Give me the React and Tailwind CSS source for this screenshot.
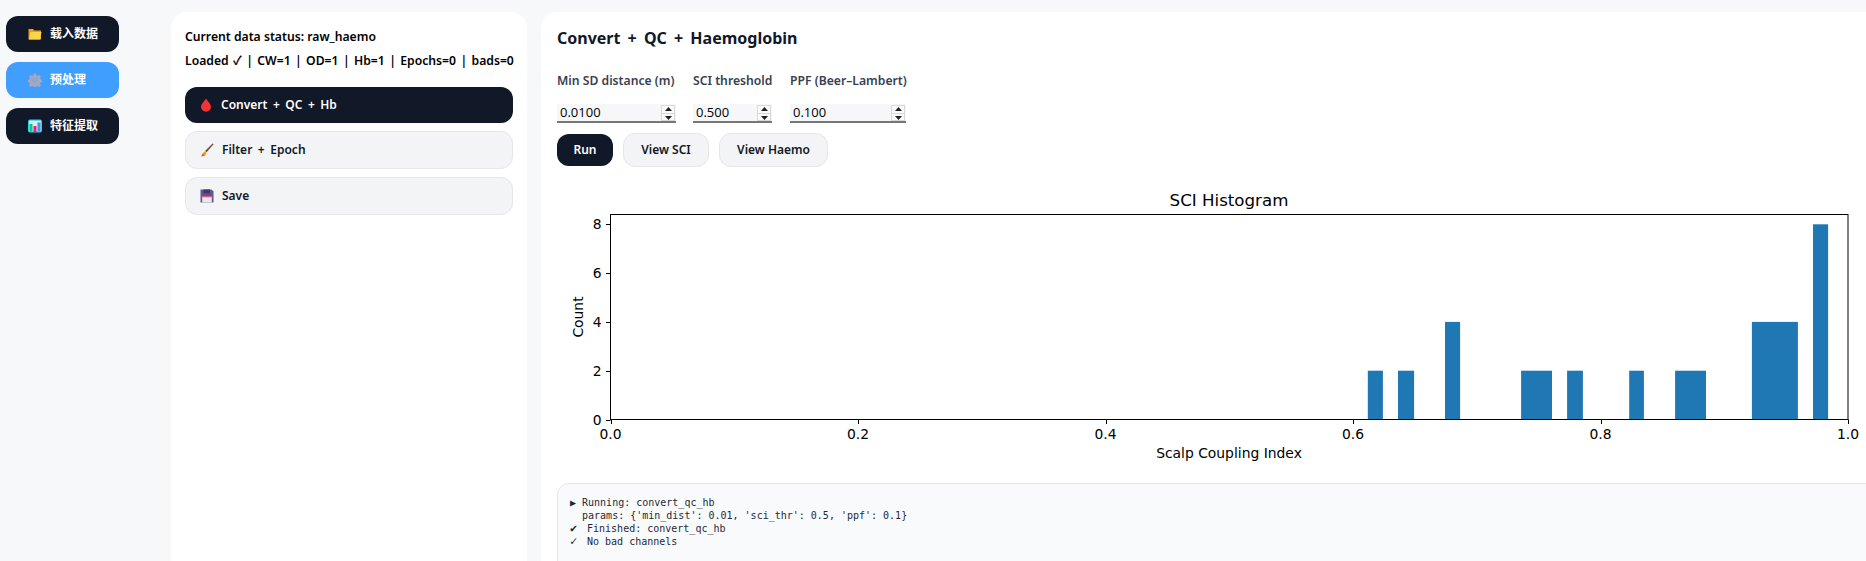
import React from "react";

const FONT = "font-['Noto_Sans','Noto_Sans_CJK_SC',sans-serif]";

const FolderIcon = () => (
    <svg width="14" height="14" viewBox="0 0 14 14" className="shrink-0">
        <path d="M0.5 2h4.5l1.2 1.5h6.8v9h-12.5z" fill="#f59e0b" />
        <path d="M2.5 5h11l-1.5 7.5h-11z" fill="#fcd34d" />
    </svg>
);

const GearIcon = () => (
    <svg width="14" height="14" viewBox="0 0 14 14" className="shrink-0">
        <path
            d="M5.8 0.6h2.4l.3 1.8 1.3.6 1.5-1 1.7 1.7-1 1.5.6 1.3 1.8.3v2.4l-1.8.3-.6 1.3 1 1.5-1.7 1.7-1.5-1-1.3.6-.3 1.8h-2.4l-.3-1.8-1.3-.6-1.5 1-1.7-1.7 1-1.5-.6-1.3-1.8-.3v-2.4l1.8-.3.6-1.3-1-1.5 1.7-1.7 1.5 1 1.3-.6z"
            fill="#a5a8bd"
        />
        <circle cx="7" cy="7" r="2.6" fill="#7fa6dc" />
        <circle cx="7" cy="7" r="1.2" fill="#a5a8bd" />
    </svg>
);

const ChartIcon = () => (
    <svg width="14" height="14" viewBox="0 0 14 14" className="shrink-0">
        <rect x="0" y="0.5" width="14" height="13" rx="2" fill="#22d3ee" />
        <rect x="1.2" y="1.7" width="11.6" height="10.6" fill="#e5e7eb" />
        <rect x="1.5" y="5" width="3" height="7.5" fill="#10c77f" />
        <rect x="5.5" y="7" width="3" height="6" fill="#ec1c8c" />
        <rect x="9.5" y="3.5" width="3" height="9" fill="#2f9fd8" />
    </svg>
);

const DropIcon = () => (
    <svg width="12" height="14" viewBox="0 0 12 14" className="shrink-0">
        <path d="M6 0.5c1 2.2 5 5.2 5 8.3a5 5 0 0 1-10 0c0-3.1 4-6.1 5-8.3z" fill="#f43232" />
    </svg>
);

const BrushIcon = () => (
    <svg width="14" height="14" viewBox="0 0 14 14" className="shrink-0">
        <path d="M12.6 0.6l1 .7-7 8-1.6-1.2z" fill="#7c4a32" />
        <path d="M4.6 8.4l2 1.5c-.5 2-2 3.3-5.6 3.4 1.4-1 1.6-3.8 3.6-4.9z" fill="#f59e0b" />
        <path d="M1 13.3c1-.7 1.4-1.6 1.8-2.6l1.8 1.5c-.9.7-2 1-3.6 1.1z" fill="#ef4444" />
    </svg>
);

const SaveIcon = () => (
    <svg width="14" height="14" viewBox="0 0 14 14" className="shrink-0">
        <path d="M0.5 0.5h11l2 2v11h-13z" fill="#5f5791" />
        <rect x="3.5" y="0.5" width="6.5" height="4" fill="#3f3a6b" />
        <rect x="2.2" y="7" width="9.6" height="6.5" fill="#e8e6ef" />
        <rect x="2.2" y="7" width="9.6" height="1.2" fill="#e0566a" />
    </svg>
);

const navItems = [
    { label: "载入数据", icon: <FolderIcon />, active: false },
    { label: "预处理", icon: <GearIcon />, active: true },
    { label: "特征提取", icon: <ChartIcon />, active: false },
];

const stepItems = [
    { label: "Convert + QC + Hb", icon: <DropIcon />, active: true },
    { label: "Filter + Epoch", icon: <BrushIcon />, active: false },
    { label: "Save", icon: <SaveIcon />, active: false },
];

const params = [
    { label: "Min SD distance (m)", value: "0.0100", step: "0.0001", width: "w-[119px]", col: "w-[136px]" },
    { label: "SCI threshold", value: "0.500", step: "0.01", width: "w-[79px]", col: "w-[97px]" },
    { label: "PPF (Beer–Lambert)", value: "0.100", step: "0.01", width: "w-[116px]", col: "w-[130px]" },
];

// left / right edge in svg coordinates, height in counts
const bars = [
    [810.8, 825.9, 2],
    [841, 857.1, 2],
    [888, 903.1, 4],
    [964.1, 995, 2],
    [1010.1, 1025.9, 2],
    [1072.2, 1086.9, 2],
    [1118.1, 1149, 2],
    [1194.9, 1240.9, 4],
    [1256, 1271.1, 8],
];

const AX = { left: 53.5, right: 1291, top: 34.5, bottom: 239.5 };
const yPos = (c) => AX.bottom - c * 24.4;
const xPos = (v) => AX.left + v * (AX.right - AX.left);

const Histogram = () => (
    <svg width="1309" height="300" viewBox="0 0 1309 300" className="block shrink-0" fontFamily="'DejaVu Sans', sans-serif" fill="#000">
        <rect width="1309" height="300" fill="#fff" />
        {bars.map(([a, b, c]) => (
            <rect key={a} x={a} y={yPos(c)} width={b - a} height={c * 24.4} fill="#1f77b4" />
        ))}
        <rect x={AX.left} y={AX.top} width={AX.right - AX.left} height={AX.bottom - AX.top} fill="none" stroke="#000" strokeWidth="1" />
        {[0, 2, 4, 6, 8].map((c) => (
            <g key={c}>
                <line x1={AX.left - 4.5} x2={AX.left} y1={Math.round(yPos(c)) + 0.5} y2={Math.round(yPos(c)) + 0.5} stroke="#000" />
                <text x={AX.left - 9} y={yPos(c) + 5} textAnchor="end" fontSize="13.89">{c}</text>
            </g>
        ))}
        {[0, 0.2, 0.4, 0.6, 0.8, 1].map((v) => (
            <g key={v}>
                <line x1={Math.round(xPos(v)) + 0.5} x2={Math.round(xPos(v)) + 0.5} y1={AX.bottom} y2={AX.bottom + 4.5} stroke="#000" />
                <text x={xPos(v)} y="259" textAnchor="middle" fontSize="13.89">{v.toFixed(1)}</text>
            </g>
        ))}
        <text x="672" y="26" textAnchor="middle" fontSize="16.67">SCI Histogram</text>
        <text x="672" y="278" textAnchor="middle" fontSize="13.89">Scalp Coupling Index</text>
        <text transform="translate(26 137) rotate(-90)" textAnchor="middle" fontSize="13.89">Count</text>
    </svg>
);

const Spinner = () => (
    <span className="pointer-events-none absolute right-[1px] top-[1px] flex h-[16px] w-[14px] flex-col items-center justify-center gap-[2px] border border-[#d8d8d8] bg-[#fbfbfb]">
        <svg width="7" height="4" viewBox="0 0 7 4"><path d="M3.5 0L7 4H0z" fill="#222" /></svg>
        <span className="h-px w-full bg-[#d8d8d8]" />
        <svg width="7" height="4" viewBox="0 0 7 4"><path d="M0 0h7L3.5 4z" fill="#222" /></svg>
    </span>
);

const App = () => {
    return (
        <div className={`${FONT} flex h-screen w-full overflow-hidden bg-[#f7f8fa] text-[#111827]`}>
            <div className="flex w-[119px] shrink-0 flex-col gap-[10px] pl-[6px] pt-4">
                {navItems.map((item) => (
                    <button
                        key={item.label}
                        className={`flex h-9 w-[113px] items-center gap-2 rounded-xl pl-[22px] text-xs font-semibold text-white ${
                            item.active ? "bg-[#409eff]" : "bg-[#111827]"
                        }`}
                    >
                        {item.icon}
                        <span>{item.label}</span>
                    </button>
                ))}
            </div>

            <div className="ml-[52px] mt-3 w-[356px] shrink-0 rounded-t-2xl bg-white pl-[14px] pt-[15px]">
                <p className="text-[12.2px] font-semibold leading-[20px] text-black">Current data status: raw_haemo</p>
                <p className="mt-1 whitespace-nowrap text-[12.2px] font-semibold leading-[20px] text-black [word-spacing:1.2px]">
                    Loaded ✓ | CW=1 | OD=1 | Hb=1 | Epochs=0 | bads=0
                </p>
                <div className="mt-4 flex flex-col gap-2">
                    {stepItems.map((item) => (
                        <button
                            key={item.label}
                            className={`flex w-[328px] items-center rounded-xl text-xs font-semibold [word-spacing:2.4px] ${
                                item.active
                                    ? "h-9 gap-[9px] bg-[#111827] pl-[15px] text-white"
                                    : "h-[38px] gap-2 border border-[#e5e7eb] bg-[#f3f4f6] pl-[14px] text-[#111827]"
                            }`}
                        >
                            {item.icon}
                            <span>{item.label}</span>
                        </button>
                    ))}
                </div>
            </div>

            <div className="ml-[14px] mt-3 w-[1340px] shrink-0 rounded-t-2xl bg-white pl-4 pt-[14px]">
                <h2 className="text-base font-bold leading-6 text-[#111827] [word-spacing:3px]">Convert + QC + Haemoglobin</h2>

                <div className="mt-[23px] flex">
                    {params.map((p) => (
                        <div key={p.label} className={p.col}>
                            <label className="block whitespace-nowrap text-[12.2px] font-semibold leading-4 text-[#374151]">{p.label}</label>
                        </div>
                    ))}
                </div>
                <div className="mt-[15px] flex">
                    {params.map((p) => (
                        <div key={p.label} className={p.col}>
                            <div className={`${p.width} relative`}>
                                <input
                                    type="number"
                                    defaultValue={p.value}
                                    step={p.step}
                                    className="block h-[19px] w-full border-b-2 border-[#767676] bg-[#f6f7f9] pl-[3px] pt-px font-['Open_Sans',sans-serif] text-[13px] text-black [&::-webkit-inner-spin-button]:appearance-none"
                                />
                                <Spinner />
                            </div>
                        </div>
                    ))}
                </div>

                <div className="mt-[10px] flex items-center gap-[10px]">
                    <button className="h-8 w-[56px] rounded-xl bg-[#111827] text-xs font-semibold text-white">Run</button>
                    <button className="h-[34px] w-[86px] rounded-xl border border-[#e5e7eb] bg-[#f3f4f6] text-xs font-semibold text-[#111827]">View SCI</button>
                    <button className="h-[34px] w-[109px] rounded-xl border border-[#e5e7eb] bg-[#f3f4f6] text-xs font-semibold text-[#111827]">View Haemo</button>
                </div>

                <div className="mt-[13px]">
                    <Histogram />
                </div>

                <div className="mt-[3px] h-[120px] w-[1320px] rounded-t-xl border border-[#e5e7eb] bg-[#f9fafb] pl-3 pt-3">
                    <pre className="font-['DejaVu_Sans_Mono',monospace] text-[10px] leading-[13px] text-[#1f2937]">
                        {"▶ Running: convert_qc_hb\n  params: {'min_dist': 0.01, 'sci_thr': 0.5, 'ppf': 0.1}\n"}
                        <span className="inline-block w-[11px] text-[12px] leading-[13px]">✔</span>
                        {" Finished: convert_qc_hb\n"}
                        <span className="inline-block w-[11px] text-[12px] leading-[13px]">✓</span>
                        {" No bad channels"}
                    </pre>
                </div>
            </div>
        </div>
    );
};

export default App;
